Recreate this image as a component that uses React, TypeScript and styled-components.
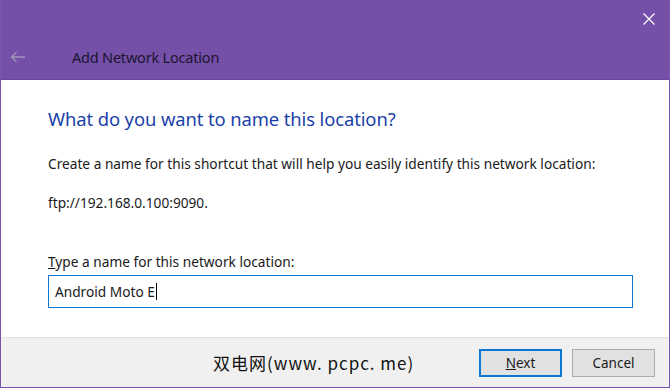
import React from 'react';
import styled, { createGlobalStyle } from 'styled-components';

const GlobalStyle = createGlobalStyle`
  html, body {
    margin: 0;
    padding: 0;
    background: #ffffff;
  }
  body {
    font-family: "Noto Sans", "Open Sans", sans-serif;
  }
`;

const App: React.FC = () => {
  return (
    <>
      <GlobalStyle />
      <Window>
        <TitleBar>
          <CloseRow>
            <CloseButton aria-label="Close">
              <svg width="12" height="12" viewBox="0 0 12 12">
                <path d="M0.5 0.5 L11.5 11.5 M11.5 0.5 L0.5 11.5" stroke="#ffffff" strokeWidth="1.2" />
              </svg>
            </CloseButton>
          </CloseRow>
          <HeaderRow>
            <BackArrow>
              <svg width="16" height="12" viewBox="0 0 16 12">
                <path d="M15 6 H1.5 M6.5 1 L1.5 6 L6.5 11" stroke="#a394b8" strokeWidth="1.3" fill="none" />
              </svg>
            </BackArrow>
            <WindowTitle>Add Network Location</WindowTitle>
          </HeaderRow>
        </TitleBar>

        <Content>
          <Heading>What do you want to name this location?</Heading>
          <BodyText>Create a name for this shortcut that will help you easily identify this network location:</BodyText>
          <BodyText>ftp://192.168.0.100:9090.</BodyText>
          <FieldLabel>
            <u>T</u>ype a name for this network location:
          </FieldLabel>
          <NameInput>
            <span>Android Moto E</span>
            <Caret />
          </NameInput>
        </Content>

        <Footer>
          <Watermark>双电网(www. pcpc. me)</Watermark>
          <DialogButton primary>
            <u>N</u>ext
          </DialogButton>
          <DialogButton>Cancel</DialogButton>
        </Footer>
      </Window>
    </>
  );
};

export default App;

const Window = styled.div`
  width: 670px;
  height: 388px;
  box-sizing: border-box;
  border: 1px solid #7a55b0;
  border-top: none;
  display: flex;
  flex-direction: column;
  background: #ffffff;
  overflow: hidden;
`;

const TitleBar = styled.div`
  height: 80px;
  flex-shrink: 0;
  box-sizing: border-box;
  background: #7450a8;
  border-bottom: 1px solid #6a47a0;
  margin: 0 -1px;
  display: flex;
  flex-direction: column;
`;

const CloseRow = styled.div`
  display: flex;
  justify-content: flex-end;
  padding: 13px 15px 0 0;
  height: 42px;
  box-sizing: border-box;
`;

const CloseButton = styled.div`
  width: 12px;
  height: 12px;
  display: flex;
`;

const HeaderRow = styled.div`
  display: flex;
  align-items: center;
  height: 30px;
  padding-left: 10px;
  box-sizing: border-box;
`;

const BackArrow = styled.div`
  width: 16px;
  height: 12px;
  display: flex;
  margin-right: 46px;
`;

const WindowTitle = styled.div`
  font-size: 14.5px;
  color: #1c1430;
  letter-spacing: -0.2px;
`;

const Content = styled.div`
  flex: 1;
  padding: 26px 37px 0 47px;
  display: flex;
  flex-direction: column;
`;

const Heading = styled.div`
  font-size: 18.4px;
  color: #1b3fa8;
  line-height: 26px;
  margin-bottom: 23px;
  letter-spacing: -0.1px;
`;

const BodyText = styled.div`
  font-size: 13.7px;
  color: #1a1a1a;
  line-height: 18px;
  margin-bottom: 21px;
`;

const FieldLabel = styled.div`
  font-size: 13.7px;
  color: #1a1a1a;
  line-height: 18px;
  margin-top: 20px;
  margin-bottom: 4px;
`;

const NameInput = styled.div`
  height: 33px;
  width: 585px;
  box-sizing: border-box;
  border: 1px solid #0f78d4;
  display: flex;
  align-items: center;
  padding-left: 6px;
  font-size: 13.7px;
  color: #1a1a1a;
`;

const Caret = styled.span`
  display: inline-block;
  width: 1px;
  height: 17px;
  background: #000000;
  margin-left: 1px;
`;

const Footer = styled.div`
  height: 50px;
  flex-shrink: 0;
  box-sizing: border-box;
  background: #f0f0f0;
  border-top: 1px solid #e3e3e3;
  display: flex;
  align-items: center;
  padding: 0 14px 0 0;
  gap: 10px;
`;

const Watermark = styled.div`
  flex: 1;
  padding-left: 212px;
  font-family: "Noto Sans CJK SC", "Liberation Sans", sans-serif;
  font-size: 17px;
  letter-spacing: 1px;
  color: #111111;
`;

const DialogButton = styled.div<{ primary?: boolean }>`
  width: 83px;
  height: 28px;
  box-sizing: border-box;
  display: flex;
  align-items: center;
  justify-content: center;
  font-size: 13.5px;
  color: #1a1a1a;
  background: #e1e1e1;
  border: ${({ primary }) => (primary ? '2px solid #0f78d4' : '1px solid #adadad')};
`;
